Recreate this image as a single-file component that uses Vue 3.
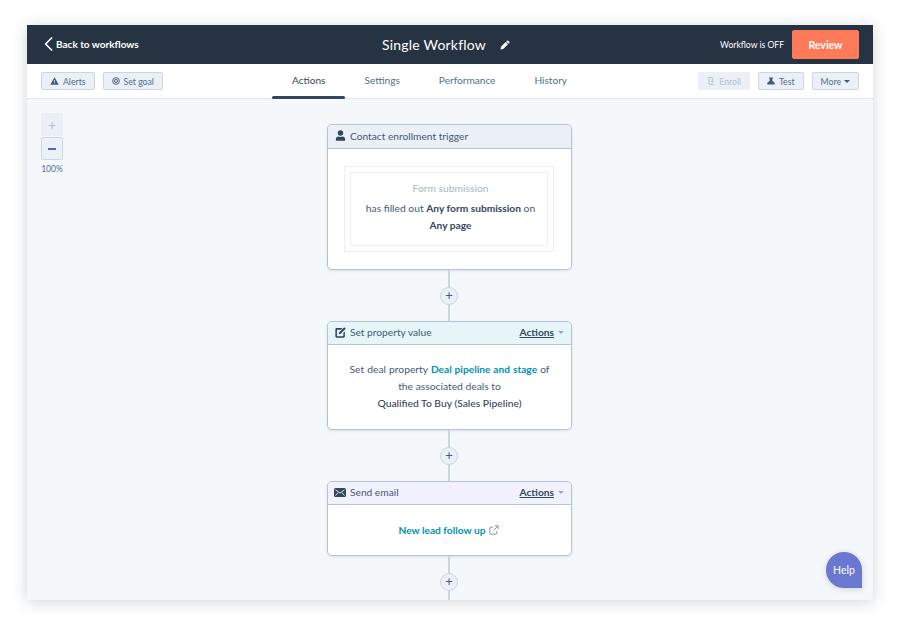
<script setup>
const tabs = [
  { label: 'Actions', active: true },
  { label: 'Settings' },
  { label: 'Performance' },
  { label: 'History' },
]
</script>

<template>
  <div class="page">
    <div class="window">
      <header class="topbar">
        <a class="back">
          <svg class="chev" viewBox="0 0 9 14" width="9" height="14"><path d="M7.6 1 1.6 7l6 6" fill="none" stroke="#fff" stroke-width="1.7" stroke-linecap="round" stroke-linejoin="round"/></svg>
          Back to workflows
        </a>
        <div class="title">
          <span>Single Workflow</span>
          <svg viewBox="0 0 12 12" width="10" height="10"><path d="M8.4.9a1 1 0 0 1 1.4 0l1.3 1.3a1 1 0 0 1 0 1.4l-.9.9-2.7-2.7zM6.8 2.5l2.7 2.7-5.6 5.600L.6 11.400l.6-3.300z" fill="#fff"/></svg>
        </div>
        <div class="status">
          <span>Workflow is OFF</span>
          <button class="review">Review</button>
        </div>
      </header>

      <nav class="toolbar">
        <div class="tool-group">
          <button class="btn">
            <svg viewBox="0 0 12 11" width="9" height="8"><path d="M6 .4 11.800 10.600H.2z" fill="#425b76"/><path d="M5.500 4h1v3.500h-1zM5.500 8h1v1h-1z" fill="#eaf0f6"/></svg>
            Alerts
          </button>
          <button class="btn">
            <svg viewBox="0 0 12 12" width="8" height="8"><circle cx="6" cy="6" r="5" fill="none" stroke="#425b76" stroke-width="1.400"/><circle cx="6" cy="6" r="2.300" fill="none" stroke="#425b76" stroke-width="1.400"/></svg>
            Set goal
          </button>
        </div>
        <div class="tabs">
          <span v-for="t in tabs" :key="t.label" class="tab" :class="{ active: t.active }">{{ t.label }}</span>
        </div>
        <div class="tool-group right">
          <button class="btn disabled">
            <svg viewBox="0 0 12 12" width="8" height="8"><path d="M1 1h7v7M8 8 6.300 6.300M8 8l1.700-1.700M3 3v8h8" fill="none" stroke="#b0c1d4" stroke-width="1.500"/></svg>
            Enroll
          </button>
          <button class="btn">
            <svg viewBox="0 0 12 12" width="8" height="8"><path d="M3 .8h6v1.500H8v3.500l3.500 3v2.400H.5V8.800l3.500-3V2.300H3z" fill="#425b76"/></svg>
            Test
          </button>
          <button class="btn">
            More
            <span class="caret dark"></span>
          </button>
        </div>
      </nav>

      <main class="canvas">
        <div class="zoom">
          <button class="zoom-btn off">+</button>
          <button class="zoom-btn on"><i></i></button>
          <span>100%</span>
        </div>

        <div class="flow">
          <section class="card">
            <div class="card-head grey">
              <svg viewBox="0 0 12 12" width="11" height="11"><circle cx="6" cy="3.400" r="3" fill="#33475b"/><path d="M1 11.600V9.500c0-1.300 1.500-2 2.800-2.300.7.600 3.700.6 4.400 0C9.500 7.500 11 8.200 11 9.500v2.100z" fill="#33475b"/></svg>
              <span class="head-label">Contact enrollment trigger</span>
            </div>
            <div class="trigger-body">
              <div class="outer">
                <div class="inner">
                  <p class="form-label">Form submission</p>
                  <p>has filled out <b>Any form submission</b> on</p>
                  <p><b>Any page</b></p>
                </div>
              </div>
            </div>
          </section>

          <div class="link"><span class="plus">+</span></div>

          <section class="card">
            <div class="card-head short teal">
              <svg viewBox="0 0 12 12" width="11" height="11"><path d="M1.800 1.200h6.500L6.500 3H2.600a.5.5 0 0 0-.5.500v6a.5.500 0 0 0 .5.500h6a.5.500 0 0 0 .5-.500V6.500L10.800 5v5.200a1.500 1.500 0 0 1-1.500 1.500H2A1.500 1.500 0 0 1 .4 10.200V2.600a1.400 1.400 0 0 1 1.400-1.400z" fill="#33475b"/><path d="M10.200.3l1.500 1.500-5.500 5.500-2.200.7.700-2.200z" fill="#33475b"/></svg>
              <span class="head-label">Set property value</span>
              <span class="actions">Actions</span>
              <span class="caret"></span>
            </div>
            <div class="body property">
              <p class="spaced">Set deal property <a>Deal pipeline and stage</a> of</p>
              <p>the associated deals to</p>
              <p class="strong">Qualified To Buy (Sales Pipeline)</p>
            </div>
          </section>

          <div class="link"><span class="plus">+</span></div>

          <section class="card">
            <div class="card-head short violet">
              <svg class="mail" viewBox="0 0 12 9" width="12" height="9"><rect width="12" height="9" rx="1.500" fill="#33475b"/><path d="M1.500 1.800 6 5l4.500-3.200M1.500 7.500 4.200 4.500M10.500 7.500 7.800 4.500" fill="none" stroke="#f0f1fa" stroke-width="0.900"/></svg>
              <span class="head-label">Send email</span>
              <span class="actions">Actions</span>
              <span class="caret"></span>
            </div>
            <div class="body email">
              <a>New lead follow up</a>
              <svg viewBox="0 0 12 12" width="10" height="10"><path d="M9.500 7v3a1 1 0 0 1-1 1H2a1 1 0 0 1-1-1V3.500a1 1 0 0 1 1-1h3M7 1h4v4M11 1 5.500 6.500" fill="none" stroke="#7c98b6" stroke-width="1.200"/></svg>
            </div>
          </section>

          <div class="link last"><span class="plus">+</span></div>
        </div>

        <button class="help">Help</button>
      </main>
    </div>
  </div>
</template>

<style>
html, body { margin: 0; background: #fff; }
</style>

<style scoped>
.page {
  box-sizing: border-box;
  width: 900px;
  height: 625px;
  padding: 25px 27px;
  font-family: Lato, "Open Sans", sans-serif;
  color: #33475b;
  overflow: hidden;
}
.window {
  height: 575px;
  display: flex;
  flex-direction: column;
  box-shadow: 0 2px 14px rgba(45, 62, 80, 0.22);
  overflow: hidden;
}
p { margin: 0; }
button { font-family: inherit; cursor: pointer; }

.topbar {
  flex: 0 0 39px;
  display: grid;
  grid-template-columns: 338px auto 1fr;
  align-items: center;
  padding: 0 14px 0 17px;
  background: #253342;
  color: #fff;
}
.back {
  display: flex;
  align-items: center;
  gap: 3px;
  padding-bottom: 1px;
  font-size: 10px;
  font-weight: 700;
}
.title {
  display: flex;
  align-items: center;
  gap: 14px;
  font-size: 14px;
  letter-spacing: 0.2px;
}
.status {
  display: flex;
  align-items: center;
  justify-content: flex-end;
  gap: 8px;
  font-size: 8.600px;
}
.review {
  width: 67px;
  height: 29px;
  border: 1px solid #ff7a59;
  border-radius: 2px;
  background: #ff7a59;
  color: #fff;
  font-size: 10.500px;
  font-weight: 700;
}

.toolbar {
  flex: 0 0 34px;
  box-sizing: border-box;
  display: grid;
  grid-template-columns: 251px auto 1fr;
  align-items: start;
  padding: 0 14px;
  background: #fff;
  border-bottom: 1px solid #dfe3eb;
}
.tool-group {
  display: flex;
  gap: 8px;
  padding-top: 8px;
}
.tool-group.right { justify-content: flex-end; }
.btn {
  height: 18px;
  display: flex;
  align-items: center;
  gap: 4px;
  padding: 0 8px;
  box-sizing: border-box;
  border: 1px solid #cbd6e2;
  border-radius: 2px;
  background: #eaf0f6;
  color: #506e91;
  font-size: 8.700px;
}
.btn.disabled {
  border-color: #eaf0f6;
  color: #b0c1d4;
}
.tabs {
  display: flex;
  align-items: flex-start;
  gap: 39px;
  height: 34px;
}
.tab {
  position: relative;
  padding: 10px 0 0;
  font-size: 10.100px;
  color: #516f90;
}
.tab.active { color: #33475b; }
.tab.active::after {
  content: "";
  position: absolute;
  left: -20px;
  right: -20px;
  top: 32px;
  height: 3px;
  border-radius: 2px;
  background: #33475b;
}

.canvas {
  position: relative;
  flex: 1;
  min-height: 0;
  background: #f5f8fa;
  overflow: hidden;
}
.zoom {
  position: absolute;
  left: 14px;
  top: 14px;
  width: 22px;
  display: flex;
  flex-direction: column;
  align-items: center;
  gap: 1px;
  font-size: 8.500px;
  color: #516f90;
}
.zoom span { margin-top: 3px; white-space: nowrap; }
.zoom-btn {
  width: 22px;
  height: 23px;
  padding: 0;
  display: flex;
  align-items: center;
  justify-content: center;
  border-radius: 2px;
  box-sizing: border-box;
}
.zoom-btn.off {
  border: 1px solid #eaf0f6;
  background: #eaf0f6;
  color: #b0c1d4;
  font-size: 14px;
}
.zoom-btn.on {
  border: 1px solid #cbd6e2;
  background: #eaf0f6;
}
.zoom-btn i {
  width: 8px;
  height: 2px;
  background: #506e91;
}

.flow {
  width: 245px;
  margin: 25px 0 0 300px;
  display: flex;
  flex-direction: column;
  font-size: 10.300px;
}
.card {
  box-sizing: border-box;
  border: 1px solid #b4c3d6;
  border-radius: 5px;
  background: #fff;
  box-shadow: 0 1px 3px rgba(45, 62, 80, 0.12);
  overflow: hidden;
}
.card-head {
  height: 24px;
  display: flex;
  align-items: center;
  padding: 0 7px 2px;
  box-sizing: border-box;
  border-bottom: 1px solid #b4c3d6;
  font-size: 10.200px;
}
.card-head.short { height: 23px; }
.card-head.grey { background: #eaf0f6; }
.card-head.teal { background: #e5f5f8; }
.card-head.violet { background: #f0f1fa; }
.head-label {
  flex: 1;
  margin-left: 4px;
  color: #425b76;
}
.mail { margin-left: -1px; }
.actions {
  font-weight: 700;
  color: #33475b;
  text-decoration: underline;
}
.caret {
  width: 0;
  height: 0;
  margin-left: 4px;
  border: 3.500px solid transparent;
  border-top: 3.500px solid #99acc2;
  border-bottom: 0;
}
.caret.dark { border-top-color: #425b76; margin-left: -1px; }

.trigger-body { padding: 17px 17px 17px 16px; }
.outer {
  padding: 5px;
  border: 1px solid #eaf0f6;
}
.inner {
  height: 74px;
  box-sizing: border-box;
  padding: 7px 0 0 3px;
  border: 1px solid #eaf0f6;
  text-align: center;
  line-height: 17px;
  color: #425b76;
}
.inner b { color: #33475b; font-size: 10.200px; }
.form-label { color: #a5b6cb; margin-bottom: 3px; }

.body { text-align: center; color: #425b76; line-height: 17px; }
.property { height: 84px; box-sizing: border-box; padding-top: 16px; }
.spaced { word-spacing: 0.4px; }
.strong { color: #33475b; font-weight: 500; }
.body a { color: #0091ae; font-size: 10.200px; font-weight: 700; }
.email {
  height: 50px;
  box-sizing: border-box;
  display: flex;
  justify-content: center;
  align-items: center;
  gap: 3px;
  padding-right: 2px;
}

.link {
  position: relative;
  flex: 0 0 51px;
  height: 51px;
  display: flex;
  align-items: center;
  justify-content: center;
}
.link::before {
  content: "";
  position: absolute;
  top: 0;
  bottom: 0;
  left: 121px;
  width: 2px;
  background: #cbd6e2;
}
.plus {
  position: relative;
  margin-left: -1px;
  width: 18px;
  height: 18px;
  box-sizing: border-box;
  display: flex;
  align-items: center;
  justify-content: center;
  border: 1px solid #cbd6e2;
  border-radius: 50%;
  background: #eaf0f6;
  color: #425b76;
  font-size: 13px;
  line-height: 1;
}

.help {
  position: absolute;
  right: 11px;
  bottom: 12px;
  width: 36px;
  height: 36px;
  padding: 0;
  border: 0;
  border-radius: 18px 18px 0 18px;
  background: #6a78d1;
  color: #fff;
  font-size: 10.500px;
  box-shadow: 0 1px 6px rgba(45, 62, 80, 0.2);
}
</style>
